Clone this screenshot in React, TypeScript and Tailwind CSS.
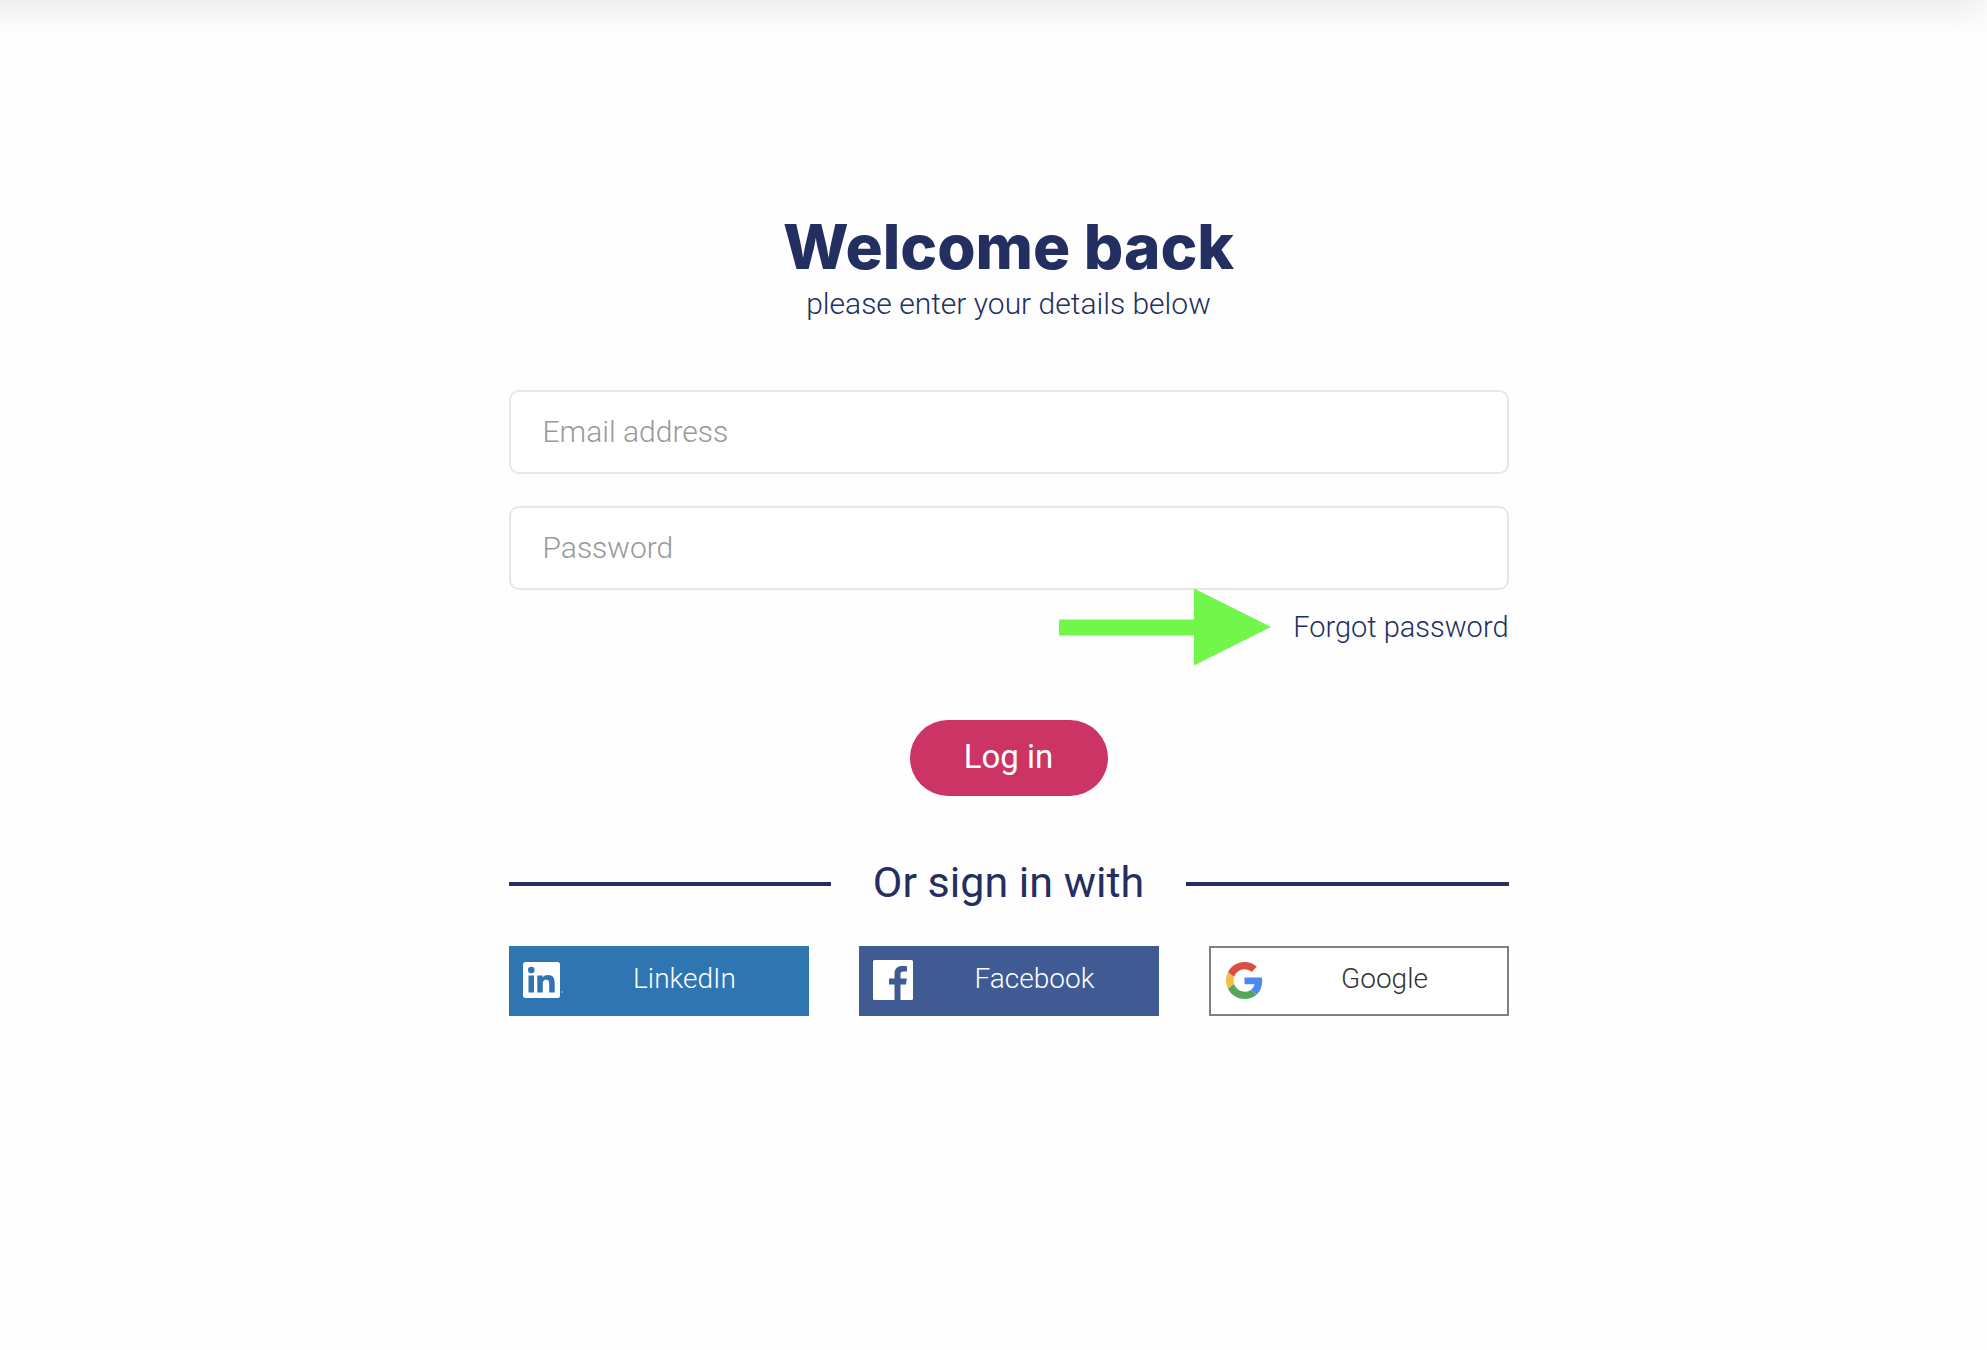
import type { ReactNode } from "react";

function LinkedInIcon() {
  return (
    <svg viewBox="0 0 40 36" className="h-9 w-10" aria-hidden="true">
      <rect width="37" height="36" rx="2.5" fill="#fff" />
      <circle cx="8.3" cy="8" r="3.3" fill="#2e75b1" />
      <path
        fill="#2e75b1"
        d="M5.500 13.500H11v17H5.500zM14.300 13.500h5.200v2.300c.9-1.600 2.800-2.700 5.200-2.700 5.500 0 7 3.500 7 8.200v9.200h-5.500v-8.400c0-2.200-.2-4.400-2.900-4.400-2.800 0-3.500 2-3.500 4.300v8.500h-5.500z"
      />
      <circle cx="39" cy="30" r="1" fill="#fff" opacity=".4" />
    </svg>
  );
}

function FacebookIcon() {
  return (
    <svg viewBox="0 0 40 40" className="size-10" aria-hidden="true">
      <rect width="40" height="40" rx="1.500" fill="#fff" />
      <path
        fill="#405a93"
        d="M21.500 40V24.500H16v-6h5.500v-4.700c0-5.200 3.100-7.800 7.800-7.800 2 0 3.800.1 4.700.3v5.300h-3.200c-2.600 0-3.300 1.200-3.300 3v3.900h6.300l-.8 6h-5.500V40z"
      />
    </svg>
  );
}

function GoogleIcon() {
  return (
    <svg viewBox="0 0 48 48" className="ml-[3px] size-[37px]" aria-hidden="true">
      <path fill="#dc4f3e" d="M24 9.500c3.540 0 6.710 1.220 9.210 3.600l6.850-6.850C35.900 2.380 30.470 0 24 0 14.620 0 6.510 5.380 2.560 13.220l7.980 6.190C12.430 13.720 17.740 9.500 24 9.500z" />
      <path fill="#4f8af0" d="M46.980 24.550c0-1.570-.15-3.090-.38-4.550H24v9.020h12.940c-.58 2.960-2.260 5.480-4.780 7.180l7.730 6c4.510-4.180 7.090-10.360 7.090-17.650z" />
      <path fill="#f4be42" d="M10.530 28.590c-.48-1.450-.76-2.990-.76-4.590s.27-3.140.76-4.590l-7.980-6.190C.92 16.460 0 20.120 0 24c0 3.880.92 7.540 2.560 10.780l7.970-6.190z" />
      <path fill="#57a75a" d="M24 48c6.480 0 11.930-2.130 15.890-5.810l-7.730-6c-2.150 1.450-4.920 2.300-8.160 2.300-6.260 0-11.570-4.220-13.470-9.910l-7.980 6.190C6.510 42.620 14.620 48 24 48z" />
    </svg>
  );
}

function SocialButton({
  icon,
  label,
  className,
}: {
  icon: ReactNode;
  label: string;
  className: string;
}) {
  return (
    <button
      type="button"
      className={`flex h-[70px] flex-1 cursor-pointer items-center border-2 pb-[2px] pl-3 text-[28px] font-light ${className}`}
    >
      <span className="flex w-10 shrink-0 justify-start">{icon}</span>
      <span className="flex-1 pb-[2px] text-center">{label}</span>
    </button>
  );
}

const inputClass =
  "h-[84px] w-full rounded-[10px] border-2 border-[#e7e7e7] bg-white px-8 pb-[2px] text-[30px] font-light text-[#232e61] outline-none placeholder:text-[#999]";

export default function App() {
  return (
    <div className="min-h-screen overflow-hidden bg-[#fefefe] font-[Roboto,'Open_Sans',sans-serif] text-[#232e61]">
      {/* Header shadow */}
      <div className="-mt-20 -ml-20 h-20 shadow-[0_6px_40px_rgba(0,0,0,0.1)]" />

      <main className="flex justify-center pt-[208px] pl-[30px]">
        <div className="w-full max-w-[1000px]">
          <div className="text-center">
            <h1 className="font-[Inter,sans-serif] text-[62px] leading-[78px] font-extrabold">
              Welcome back
            </h1>
            <p className="text-[30px] leading-9 font-light">
              please enter your details below
            </p>
          </div>

          <form className="mt-[68px]" onSubmit={(e) => e.preventDefault()}>
            <div className="flex flex-col gap-8">
              <input type="email" aria-label="Email address" placeholder="Email address" className={inputClass} />
              <input type="password" aria-label="Password" placeholder="Password" className={inputClass} />
            </div>

            {/* Forgot password */}
            <div className="flex h-[74px] items-center justify-end">
              <a href="#forgot" className="relative text-[29px] leading-9 font-light">
                <svg
                  viewBox="0 0 212 77"
                  className="absolute top-1/2 right-full mr-[22px] h-[77px] w-[212px] -translate-y-1/2"
                  aria-hidden="true"
                >
                  <path fill="#73f64b" d="M0 31h135V0l77 38.500L135 77V47H0z" />
                </svg>
                Forgot password
              </a>
            </div>

            <div className="mt-14 text-center">
              <button
                type="submit"
                className="h-[76px] w-[198px] cursor-pointer rounded-full bg-[#cb3465] pb-[2px] text-[33px] text-white"
              >
                Log in
              </button>
            </div>
          </form>

          {/* Social sign in */}
          <div className="mt-[60px] flex items-center gap-[42px]">
            <div className="h-1 flex-1 bg-[#232e61]" />
            <h2 className="pb-1 text-[43px] leading-[52px]">Or sign in with</h2>
            <div className="h-1 flex-1 bg-[#232e61]" />
          </div>

          <div className="mt-[34px] flex gap-[50px]">
            <SocialButton
              icon={<LinkedInIcon />}
              label="LinkedIn"
              className="border-[#2e75b1] bg-[#2e75b1] text-white"
            />
            <SocialButton
              icon={<FacebookIcon />}
              label="Facebook"
              className="border-[#405a93] bg-[#405a93] text-white"
            />
            <SocialButton
              icon={<GoogleIcon />}
              label="Google"
              className="border-[#808080] bg-white text-[#333]"
            />
          </div>
        </div>
      </main>
    </div>
  );
}
